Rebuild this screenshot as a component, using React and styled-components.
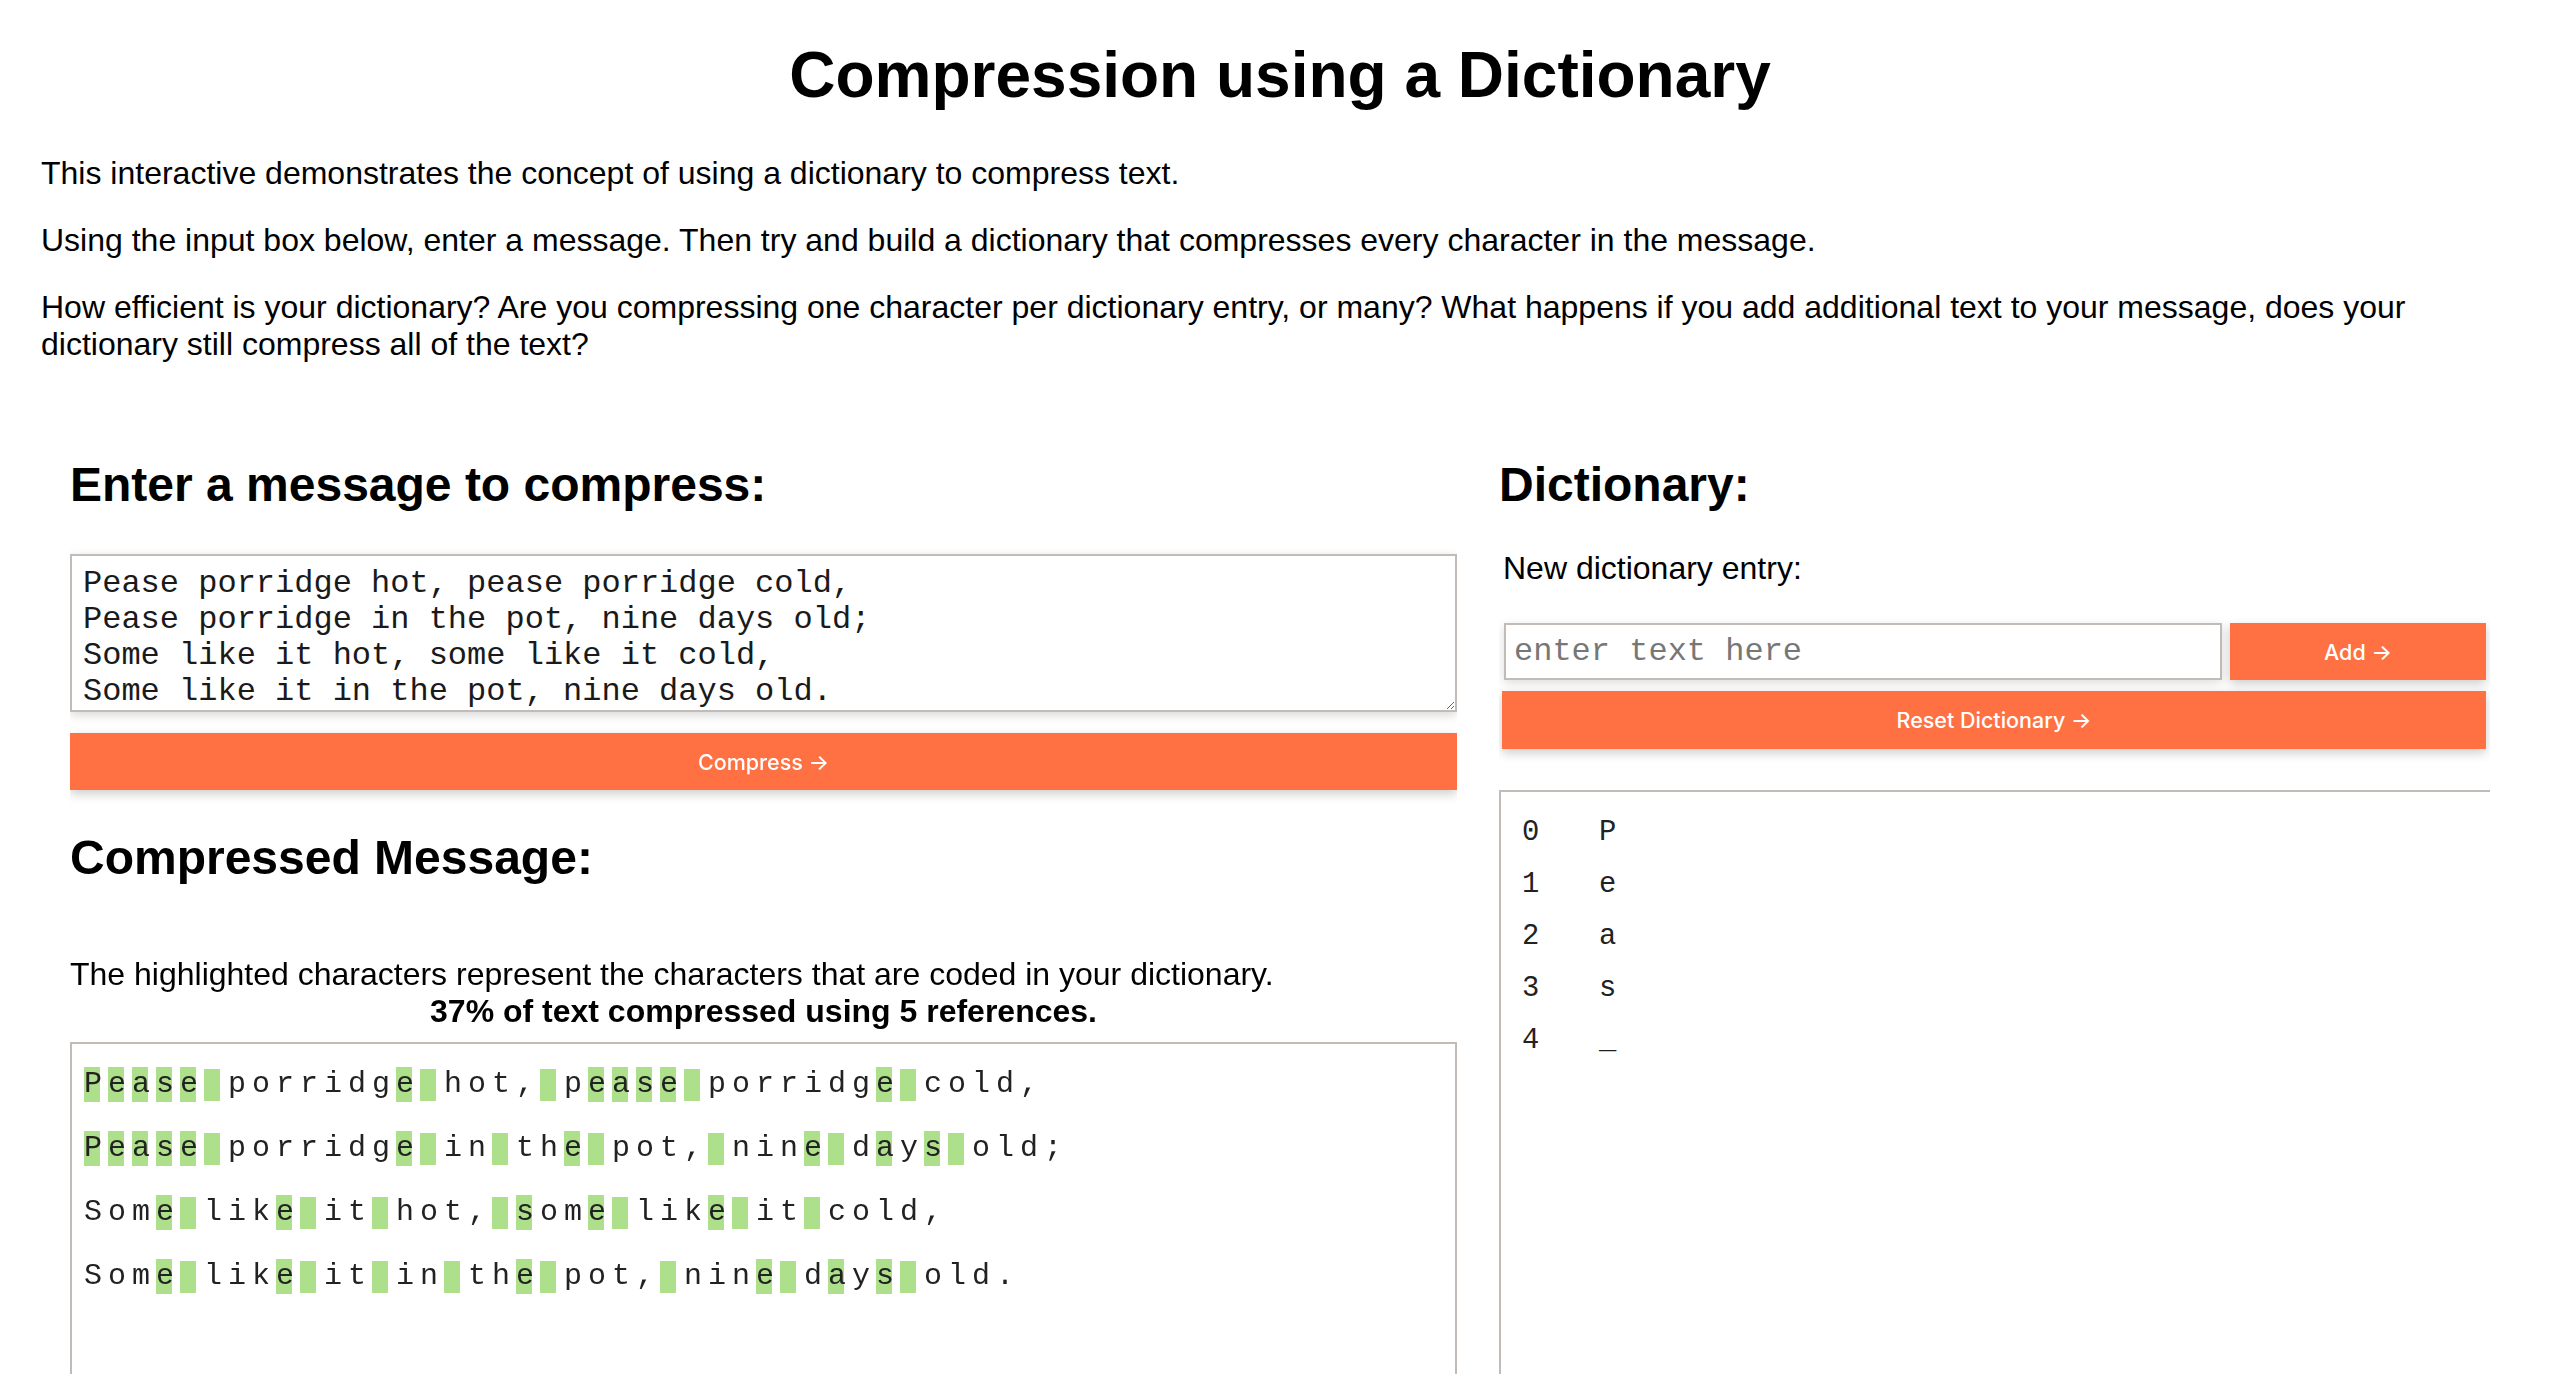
import React, { useState } from 'react';
import styled, { createGlobalStyle } from 'styled-components';

const orange = '#ff7043';
const line = '#c1bcb8';
const mono = `'Liberation Mono', 'Courier New', monospace`;
const sans = `'Liberation Sans', Arial, Helvetica, sans-serif`;

const message = `Pease porridge hot, pease porridge cold,
Pease porridge in the pot, nine days old;
Some like it hot, some like it cold,
Some like it in the pot, nine days old.`;

const entries = ['P', 'e', 'a', 's', ' '];

const GlobalStyle = createGlobalStyle`
  html, body {
    margin: 0;
    padding: 0;
    background: #ffffff;
    color: #000000;
    font-family: ${sans};
    font-size: 32px;
  }
  * {
    box-sizing: border-box;
  }
`;

const Page = styled.div`
  padding: 0 41px;
  overflow: hidden;
`;

const Title = styled.h1`
  margin: 38px 0 0;
  font-size: 64px;
  font-weight: bold;
  line-height: normal;
  text-align: center;
`;

const Intro = styled.p`
  margin: ${({ $first }) => ($first ? '43px' : '30px')} 0 0;
  font-size: 32px;
  line-height: normal;
`;

const Columns = styled.div`
  display: grid;
  grid-template-columns: 1387px 1fr;
  column-gap: 42px;
  padding: 0 29px;
  margin-top: 94px;
`;

const Column = styled.div`
  display: flex;
  flex-direction: column;
  min-width: 0;
  overflow: hidden;
`;

const Heading = styled.h2`
  margin: ${({ $top }) => $top || 0} 0 0;
  font-size: 48px;
  font-weight: bold;
  line-height: normal;
`;

const MessageInput = styled.textarea`
  margin-top: 42px;
  height: 158px;
  width: 100%;
  padding: 10px 11px 4px;
  border: 2px solid ${line};
  font-family: ${mono};
  font-size: 32px;
  line-height: 36px;
  color: #1a1a1a;
  background: #ffffff;
  box-shadow: 0 3px 10px rgba(0, 0, 0, 0.16);
  outline: none;
`;

const ActionButton = styled.button`
  display: flex;
  align-items: center;
  justify-content: center;
  height: ${({ $h }) => $h || '57px'};
  margin-top: ${({ $top }) => $top || 0};
  width: ${({ $w }) => $w || '100%'};
  flex: ${({ $w }) => ($w ? `0 0 ${$w}` : 'none')};
  border: none;
  background: ${orange};
  color: #ffffff;
  font-family: Inter, 'Noto Sans', sans-serif;
  font-size: 21.5px;
  font-weight: 500;
  box-shadow: 0 4px 10px rgba(0, 0, 0, 0.2);
  cursor: pointer;
`;

const Explain = styled.div`
  margin-top: 71px;
  font-size: 32px;
  line-height: normal;
`;

const Score = styled.div`
  font-weight: bold;
  text-align: center;
`;

const OutputBox = styled.div`
  margin-top: 12px;
  height: 420px;
  border: 2px solid ${line};
  padding: 23px 12px;
  display: flex;
  flex-direction: column;
  row-gap: 29px;
`;

const OutputRow = styled.div`
  display: flex;
  height: 35px;
`;

const Cell = styled.span`
  display: inline-block;
  flex: 0 0 16px;
  width: 16px;
  height: ${({ $space }) => ($space ? '32px' : '35px')};
  margin-top: ${({ $space }) => ($space ? '2px' : '0')};
  margin-right: 8px;
  font-family: ${mono};
  font-size: 30px;
  line-height: 35px;
  white-space: pre;
  overflow: visible;
  color: #222222;
  background: ${({ $on }) => ($on ? '#aedf8b' : 'transparent')};
`;

const Label = styled.div`
  margin-top: 38px;
  padding-left: 4px;
  font-size: 32px;
  line-height: normal;
`;

const EntryArea = styled.div`
  margin: 36px 4px 0 3px;
  display: flex;
  flex-direction: column;
`;

const EntryRow = styled.div`
  display: flex;
  gap: 8px;
  height: 58px;
`;

const EntryInput = styled.input`
  flex: 1;
  min-width: 0;
  margin-left: 2px;
  height: 57px;
  padding: 0 8px;
  border: 2px solid ${line};
  font-family: ${mono};
  font-size: 32px;
  color: #1a1a1a;
  box-shadow: 0 3px 10px rgba(0, 0, 0, 0.14);
  outline: none;
  &::placeholder {
    color: #777777;
  }
`;

const DictBox = styled.div`
  margin-top: 41px;
  height: 700px;
  border: 2px solid ${line};
  border-right: none;
  border-bottom: none;
  padding: 14px 0 0 21px;
  display: grid;
  grid-template-columns: 77px 1fr;
  grid-auto-rows: 52px;
  align-content: start;
  font-family: ${mono};
  font-size: 28.8px;
  color: #222222;
`;

const DictCell = styled.div`
  display: flex;
  align-items: center;
  white-space: pre;
`;

export default function App() {
  const [text, setText] = useState(message);
  const [entry, setEntry] = useState('');
  const dict = new Set(entries);
  const lines = message.split('\n');

  return (
    <Page>
      <GlobalStyle />
      <Title>Compression using a Dictionary</Title>
      <Intro $first>This interactive demonstrates the concept of using a dictionary to compress text.</Intro>
      <Intro>
        Using the input box below, enter a message. Then try and build a dictionary that compresses every
        character in the message.
      </Intro>
      <Intro>
        How efficient is your dictionary? Are you compressing one character per dictionary entry, or many? What
        happens if you add additional text to your message, does your dictionary still compress all of the text?
      </Intro>

      <Columns>
        <Column>
          <Heading>Enter a message to compress:</Heading>
          <MessageInput value={text} onChange={(e) => setText(e.target.value)} spellCheck={false} />
          <ActionButton $top="21px">Compress →</ActionButton>

          <Heading $top="40px">Compressed Message:</Heading>
          <Explain>
            The highlighted characters represent the characters that are coded in your dictionary.
            <Score>37% of text compressed using 5 references.</Score>
          </Explain>
          <OutputBox>
            {lines.map((row, i) => (
              <OutputRow key={i}>
                {row.split('').map((ch, j) => (
                  <Cell key={j} $on={dict.has(ch)} $space={ch === ' '}>
                    {ch}
                  </Cell>
                ))}
              </OutputRow>
            ))}
          </OutputBox>
        </Column>

        <Column>
          <Heading>Dictionary:</Heading>
          <Label>New dictionary entry:</Label>
          <EntryArea>
            <EntryRow>
              <EntryInput
                placeholder="enter text here"
                value={entry}
                onChange={(e) => setEntry(e.target.value)}
              />
              <ActionButton $w="256px">Add →</ActionButton>
            </EntryRow>
            <ActionButton $top="10px" $h="58px">Reset Dictionary →</ActionButton>
          </EntryArea>
          <DictBox>
            {entries.map((ch, i) => (
              <React.Fragment key={i}>
                <DictCell>{i}</DictCell>
                <DictCell>{ch === ' ' ? '_' : ch}</DictCell>
              </React.Fragment>
            ))}
          </DictBox>
        </Column>
      </Columns>
    </Page>
  );
}
